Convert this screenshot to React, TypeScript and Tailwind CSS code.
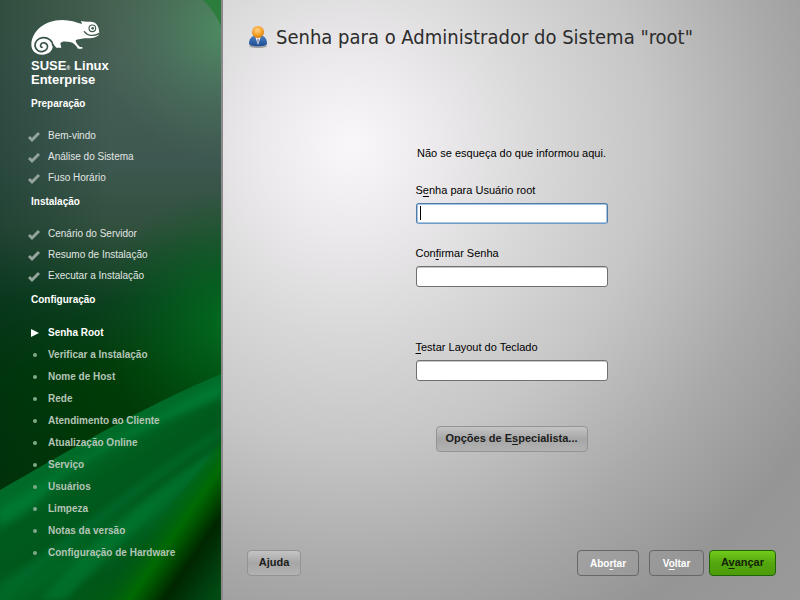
import React from 'react';

type Group = { title: string; done: boolean; steps: string[] };

const GROUPS: Group[] = [
  {
    title: 'Preparação',
    done: true,
    steps: ['Bem-vindo', 'Análise do Sistema', 'Fuso Horário'],
  },
  {
    title: 'Instalação',
    done: true,
    steps: ['Cenário do Servidor', 'Resumo de Instalação', 'Executar a Instalação'],
  },
  {
    title: 'Configuração',
    done: false,
    steps: [
      'Senha Root',
      'Verificar a Instalação',
      'Nome de Host',
      'Rede',
      'Atendimento ao Cliente',
      'Atualização Online',
      'Serviço',
      'Usuários',
      'Limpeza',
      'Notas da versão',
      'Configuração de Hardware',
    ],
  },
];

const CURRENT = 'Senha Root';

function SidebarArt() {
  return (
    <svg
      className="absolute inset-0 -z-10 h-full w-full"
      viewBox="0 0 221 600"
      preserveAspectRatio="none"
      aria-hidden="true"
    >
      <defs>
        <linearGradient id="base" x1="0" y1="0" x2="0" y2="1">
          <stop offset="0" stopColor="#45604f" />
          <stop offset="0.1" stopColor="#465f55" />
          <stop offset="0.27" stopColor="#3d5850" />
          <stop offset="0.38" stopColor="#31503e" />
          <stop offset="0.5" stopColor="#0c4020" />
          <stop offset="0.62" stopColor="#003c08" />
          <stop offset="1" stopColor="#003300" />
        </linearGradient>
        <linearGradient id="leftShade" x1="0" y1="0" x2="1" y2="0">
          <stop offset="0" stopColor="#002418" stopOpacity="0.3" />
          <stop offset="0.5" stopColor="#002418" stopOpacity="0" />
        </linearGradient>
        <radialGradient id="topGlow" gradientUnits="userSpaceOnUse" cx="225" cy="30" r="130">
          <stop offset="0" stopColor="#4f9a66" stopOpacity="0.75" />
          <stop offset="0.5" stopColor="#528a68" stopOpacity="0.35" />
          <stop offset="1" stopColor="#557c66" stopOpacity="0" />
        </radialGradient>
        <radialGradient id="sideGlow" gradientUnits="userSpaceOnUse" cx="235" cy="322" r="135">
          <stop offset="0" stopColor="#007420" stopOpacity="0.9" />
          <stop offset="0.5" stopColor="#00661c" stopOpacity="0.5" />
          <stop offset="1" stopColor="#005a18" stopOpacity="0" />
        </radialGradient>
        <linearGradient id="ray" gradientUnits="userSpaceOnUse" x1="70" y1="450" x2="150" y2="590">
          <stop offset="0" stopColor="#006a28" />
          <stop offset="0.14" stopColor="#006e2c" />
          <stop offset="0.25" stopColor="#005a1e" />
          <stop offset="0.45" stopColor="#00581c" />
          <stop offset="0.6" stopColor="#006624" />
          <stop offset="0.78" stopColor="#005618" />
          <stop offset="1" stopColor="#005a12" />
        </linearGradient>
        <linearGradient id="bottomDark" gradientUnits="userSpaceOnUse" x1="152" y1="520" x2="230" y2="574">
          <stop offset="0" stopColor="#005c10" stopOpacity="0" />
          <stop offset="0.28" stopColor="#006c00" stopOpacity="0.9" />
          <stop offset="0.42" stopColor="#004c00" />
          <stop offset="0.58" stopColor="#002600" />
          <stop offset="1" stopColor="#004a14" />
        </linearGradient>
        <filter id="soft" x="-10%" y="-10%" width="120%" height="120%">
          <feGaussianBlur stdDeviation="3" />
        </filter>
      </defs>
      <rect width="221" height="600" fill="url(#base)" />
      <rect width="221" height="600" fill="url(#leftShade)" />
      <rect width="221" height="220" fill="url(#topGlow)" />
      <path d="M203 0 C211 8 217 16 221 26 V0 Z" fill="#2c7d3c" />
      <rect y="150" width="221" height="330" fill="url(#sideGlow)" />
      <path d="M0 490 C70 450 140 408 221 374 V600 H0 Z" fill="url(#ray)" />
      <g filter="url(#soft)">
        <path d="M0 508 C80 462 150 418 221 382 V396 C150 430 80 480 0 526 Z" fill="#007c34" opacity="0.7" />
        <path d="M60 478 C120 440 170 415 221 398 V420 C150 440 90 480 20 520 Z" fill="#005a1e" opacity="0.7" />
        <path d="M40 600 C90 545 150 490 221 446 V458 C160 505 110 550 66 600 Z" fill="#007a30" opacity="0.6" />
        <path d="M0 585 C70 535 150 470 221 428 V436 C150 484 70 550 0 600 Z" fill="#007030" opacity="0.5" />
      </g>
      <path d="M70 600 C130 550 180 500 221 440 V600 Z" fill="url(#bottomDark)" />
    </svg>
  );
}

function Chameleon() {
  return (
    <svg className="-ml-[5px] h-[45px] w-20" viewBox="0 0 240 135" aria-hidden="true">
      <defs>
        <mask id="cut">
          <rect width="240" height="135" fill="#fff" />
          <g fill="none" stroke="#000" strokeLinecap="round">
            <path
              d="M80 94 C80 80 66 70 51 71 C35 72 26 84 27 96 C29 108 40 115 51 112 C61 110 67 102 64 94 C61 86 51 84 46 89 C42 94 43 99 48 100"
              strokeWidth="5"
            />
            <path d="M175 53 C184 66 203 68 220 58" strokeWidth="4" />
            <circle cx="199" cy="43" r="10" strokeWidth="3.5" />
          </g>
          <circle cx="200" cy="43" r="4" fill="#000" />
        </mask>
      </defs>
      <g fill="#fff" mask="url(#cut)">
        <path d="M16 92 C17 52 56 18 108 18 C132 18 151 25 168 30 L165 21 C178 24 190 22 203 25 C212 28 219 40 219 52 C222 62 217 67 207 70 C194 75 177 72 167 74 C158 76 149 76 149 80 C150 87 157 94 162 99 L169 99 V104 H156 C150 94 142 86 132 84 C120 82 108 80 103 88 L106 101 H91 L80 88 C84 110 68 122 49 122 C29 122 16 109 16 92 Z" />
      </g>
    </svg>
  );
}

function UserIcon() {
  return (
    <svg className="h-6 w-5 shrink-0" viewBox="0 0 20 24" aria-hidden="true">
      <defs>
        <radialGradient id="face" cx="0.45" cy="0.35" r="0.65">
          <stop offset="0" stopColor="#ffd28a" />
          <stop offset="0.6" stopColor="#f6a32c" />
          <stop offset="1" stopColor="#d27c0c" />
        </radialGradient>
        <linearGradient id="coat" x1="0" y1="0" x2="0" y2="1">
          <stop offset="0" stopColor="#4f82c4" />
          <stop offset="1" stopColor="#1d4c92" />
        </linearGradient>
      </defs>
      <ellipse cx="10" cy="21" rx="9" ry="2" fill="#555" opacity="0.45" />
      <path d="M1 19 C1 13 4 10 10 10 S19 13 19 19 C18 22 2 22 1 19 Z" fill="url(#coat)" />
      <path d="M7 11 L10 20 L13 11 Z" fill="#f4f4f8" />
      <path d="M10 13 L9 15 L10 19 L11 15 Z" fill="#8a93a8" />
      <circle cx="10" cy="7" r="6" fill="url(#face)" />
    </svg>
  );
}

function Marker({ done, current }: { done: boolean; current: boolean }) {
  if (done) {
    return (
      <svg className="mt-[3px] h-3 w-3" viewBox="0 0 12 12" aria-hidden="true">
        <path d="M1 6 L4 9 L11 2" fill="none" stroke="#94a59d" strokeWidth="3" />
      </svg>
    );
  }
  if (current) {
    return (
      <svg className="mt-[2px] ml-[3px] h-2 w-2" viewBox="0 0 8 8" aria-hidden="true">
        <path d="M0 0 L8 4 L0 8 Z" fill="#fff" />
      </svg>
    );
  }
  return <span className="mt-[2px] ml-[5px] h-1 w-1 rounded-full bg-[#7fa98a]" />;
}

function Sidebar() {
  return (
    <aside className="relative isolate w-[223px] shrink-0 overflow-hidden border-r-2 border-[#8b888b] pt-[14px] pl-[31px] text-white">
      <SidebarArt />
      <Chameleon />
      <p className="text-[13px] leading-[14px] font-bold">
        <span className="flex items-baseline">
          SUSE<span className="mr-1 text-[5px] leading-none">®</span>Linux
        </span>
        <span className="block">Enterprise</span>
      </p>
      <nav className="mt-[7px]">
        {GROUPS.map((group) => (
          <section key={group.title} className="mb-1">
            <h2 className="mb-[11px] h-5 text-[10px] leading-5 font-bold">{group.title}</h2>
            <ul className="-ml-[3px] text-[10px]">
              {group.steps.map((label) => {
                const current = label === CURRENT;
                const text = group.done
                  ? 'h-[21px] text-[#e2e6e4]'
                  : current
                    ? 'h-[22px] font-bold text-white'
                    : 'h-[22px] font-bold text-[#b4c4b6]';
                return (
                  <li key={label} className={`flex items-center ${text}`} aria-current={current ? 'step' : undefined}>
                    <span className="flex w-5 items-center">
                      <Marker done={group.done} current={current} />
                    </span>
                    {label}
                  </li>
                );
              })}
            </ul>
          </section>
        ))}
      </nav>
    </aside>
  );
}

function Key({ children }: { children: string }) {
  return <span className="underline decoration-1 underline-offset-2">{children}</span>;
}

type FieldProps = { id: string; type: string; focused?: boolean; children: React.ReactNode };

function Field({ id, type, focused, children }: FieldProps) {
  return (
    <div className="flex flex-col gap-[5px]">
      <label htmlFor={id} className="text-[11px] leading-4">
        {children}
      </label>
      <div className="relative flex">
        <input
          id={id}
          type={type}
          autoFocus={focused}
          className={`h-[21px] w-full rounded-[3px] border bg-white px-1 text-[11px] outline-none ${
            focused
              ? 'border-[#4a7bab] border-b-[#6d9bca] caret-transparent shadow-[inset_0_0_0_1px_#a9c4de]'
              : 'border-[#6f6f6f] shadow-[inset_0_1px_0_#c8c8c8]'
          }`}
        />
        {focused && <span className="absolute top-[3px] left-1 h-[14px] w-px bg-black" />}
      </div>
    </div>
  );
}

const GREY =
  'h-[26px] rounded-[4px] border border-[#939393] bg-linear-to-b from-[#c4c4c4] via-[#a6a6a6] to-[#b2b2b2] pb-[2px] text-[11px] font-bold text-[#1c1c1c]';
const OUTLINE = 'h-[26px] rounded-[4px] border border-[#666866] text-[10px] font-bold text-white';
const GREEN =
  'h-[26px] rounded-[4px] border border-[#1f6408] bg-linear-to-b from-[#72cc1c] via-[#54a60e] to-[#4c9c0a] pb-[2px] text-[11px] font-bold text-[#142408]';

export default function App() {
  return (
    <div className="flex min-h-screen font-['Liberation_Sans',Arial,sans-serif]">
      <Sidebar />
      <main className="flex min-w-0 flex-1 flex-col bg-[radial-gradient(circle_at_127px_145px,#f9f7f9_0px,#ebe9eb_90px,#d9d8d9_190px,#c6c6c6_300px,#a9a9a9_430px,#949594_540px,#9b9b9b_660px)] px-6 pt-[25px] pb-6 text-black">
        <header className="flex items-center gap-2 pl-[1px]">
          <UserIcon />
          <h1 className="font-['DejaVu_Sans_Condensed','DejaVu_Sans',sans-serif] text-[20px] leading-6 text-[#2c2c2c]">
            Senha para o Administrador do Sistema "root"
          </h1>
        </header>

        <form
          id="root-password"
          className="mx-auto mt-24 flex w-48 flex-col"
          onSubmit={(e) => e.preventDefault()}
        >
          <p className="text-center text-[11px] leading-4 whitespace-nowrap">Não se esqueça do que informou aqui.</p>
          <div className="mt-[21px]">
            <Field id="password" type="password" focused>
              S<Key>e</Key>nha para Usuário root
            </Field>
          </div>
          <div className="mt-[21px]">
            <Field id="confirm" type="password">
              Con<Key>f</Key>irmar Senha
            </Field>
          </div>
          <div className="mt-[52px]">
            <Field id="layout-test" type="text">
              <Key>T</Key>estar Layout do Teclado
            </Field>
          </div>
          <button type="button" className={`mt-[45px] w-[152px] self-center whitespace-nowrap ${GREY}`}>
            Opções de E<Key>s</Key>pecialista...
          </button>
        </form>

        <footer className="mt-auto flex items-center">
          <button type="button" className={`w-[54px] ${GREY}`}>
            Ajuda
          </button>
          <button type="button" className={`ml-auto w-[62px] ${OUTLINE}`}>
            Abo<Key>r</Key>tar
          </button>
          <button type="button" className={`ml-[10px] w-[55px] ${OUTLINE}`}>
            V<Key>o</Key>ltar
          </button>
          <button type="submit" form="root-password" className={`ml-[5px] w-[67px] ${GREEN}`}>
            A<Key>v</Key>ançar
          </button>
        </footer>
      </main>
    </div>
  );
}
